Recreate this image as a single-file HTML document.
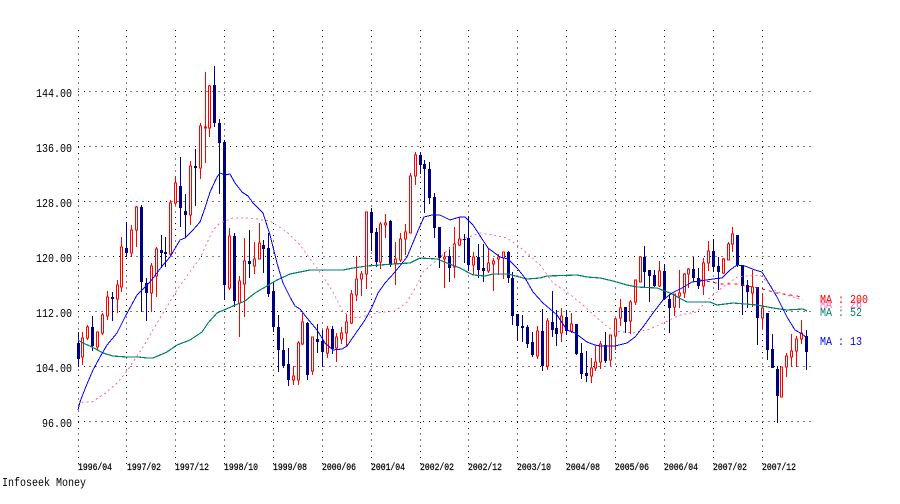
<!DOCTYPE html>
<html lang="ja"><head><meta charset="utf-8"><title>Infoseek Money</title>
<style>html,body{margin:0;padding:0;background:#fff}svg{display:block}
text{font-family:"Liberation Mono","DejaVu Sans Mono",monospace}</style></head>
<body>
<svg width="900" height="504" viewBox="0 0 900 504" xmlns="http://www.w3.org/2000/svg">
<g fill="none" stroke="#000" stroke-width="1" stroke-dasharray="1 4.85" shape-rendering="crispEdges">
<path d="M78.5 30V466M126.5 30V466M175.5 30V466M224.5 30V466M273.5 30V466M322.5 30V466M371.5 30V466M420.5 30V466M468.5 30V466M517.5 30V466M566.5 30V466M615.5 30V466M664.5 30V466M713.5 30V466M762.5 30V466"/>
<path d="M78 91.5H811M78 146.5H811M78 201.5H811M78 256.5H811M78 311.5H811M78 366.5H811M78 421.5H811"/>
</g>
<g fill="none" shape-rendering="crispEdges">
<path stroke="#000080" d="M78.5 332V367M92.5 316V351M112.5 292V321M126.5 222V257M141.5 205V312M146.5 278V321M161.5 235V268M165.5 237V267M180.5 157V227M185.5 194V238M195.5 149V206M214.5 66V127M219.5 119V194M224.5 140V300M234.5 233V307M249.5 230V278M263.5 240V273M268.5 233V297M273.5 282V332M278.5 315V372M283.5 338V368M288.5 348V386M307.5 322V380M317.5 324V353M322.5 330V367M332.5 326V354M371.5 208V251M376.5 228V267M390.5 220V267M420.5 152V174M424.5 160V213M429.5 162V204M434.5 193V238M439.5 227V268M449.5 247V282M464.5 234V263M468.5 216V270M478.5 244V278M483.5 244V282M508.5 251V283M512.5 272V325M517.5 314V340M522.5 315V342M527.5 325V348M532.5 332V357M542.5 309V371M552.5 291V337M556.5 310V346M566.5 310V334M576.5 324V355M581.5 343V379M586.5 351V382M605.5 332V363M625.5 307V333M644.5 246V287M649.5 270V302M654.5 270V287M664.5 264V300M669.5 294V333M693.5 257V282M698.5 268V289M713.5 239V272M718.5 257V290M737.5 235V267M742.5 265V315M747.5 280V308M757.5 287V345M767.5 313V360M772.5 334V368M777.5 366V423M806.5 330V370"/>
<path stroke="#000080" stroke-width="3" d="M78.5 343V359M92.5 327V346M112.5 297V299M126.5 248V253M141.5 207V282M146.5 283V293M161.5 250V253M165.5 252V254M180.5 186V208M185.5 211V215M195.5 166V168M214.5 85V123M219.5 123V143M224.5 142V285M234.5 236V301M249.5 261V264M263.5 245V249M268.5 248V294M273.5 291V327M278.5 327V350M283.5 350V366M288.5 364V380M307.5 323V375M317.5 339V342M322.5 341V352M332.5 329V349M371.5 212V233M376.5 232V262M390.5 221V265M420.5 155V165M424.5 164V169M429.5 169V198M434.5 197V228M439.5 227V258M449.5 256V268M464.5 239V240M468.5 238V265M478.5 257V270M483.5 268V271M508.5 252V278M512.5 278V316M517.5 314V326M522.5 326V328M527.5 327V344M532.5 342V355M542.5 331V366M552.5 322V330M556.5 328V334M566.5 317V331M576.5 324V354M581.5 353V374M586.5 373V376M605.5 345V361M625.5 307V322M644.5 257V272M649.5 270V276M654.5 275V286M664.5 271V299M669.5 299V308M693.5 269V278M698.5 278V286M713.5 251V267M718.5 266V272M737.5 235V265M742.5 265V286M747.5 285V292M757.5 287V318M767.5 313V350M772.5 349V368M777.5 369V396M806.5 336V352"/>
<path stroke="#f00" d="M82.5 332V365M87.5 325V340M97.5 332V350M102.5 313V335M107.5 291V320M117.5 280V313M121.5 237V292M131.5 225V257M136.5 206V247M151.5 263V312M156.5 247V297M170.5 200V256M175.5 176V205M190.5 161V225M200.5 123V179M205.5 72V163M209.5 85V137M229.5 228V290M239.5 276V337M244.5 238V317M254.5 242V274M259.5 223V259M293.5 366V385M298.5 341V385M302.5 313V345M312.5 337V375M327.5 326V358M336.5 333V362M341.5 327V344M346.5 314V347M351.5 290V324M356.5 256V301M361.5 271V296M366.5 212V289M380.5 222V269M385.5 214V238M395.5 242V285M400.5 233V262M405.5 224V255M410.5 173V233M415.5 152V185M444.5 252V288M454.5 227V278M459.5 217V246M473.5 252V275M488.5 248V273M493.5 258V291M498.5 254V275M503.5 252V279M537.5 326V359M547.5 318V370M561.5 308V342M571.5 313V333M591.5 358V383M595.5 346V371M600.5 341V369M610.5 335V366M615.5 318V350M620.5 299V326M630.5 300V334M635.5 280V305M640.5 257V282M659.5 261V287M674.5 294V316M679.5 270V308M684.5 273V298M688.5 268V288M703.5 258V295M708.5 241V271M723.5 258V274M728.5 242V260M732.5 227V252M752.5 270V307M762.5 293V329M781.5 367V397M786.5 353V377M791.5 334V367M796.5 336V367M801.5 320V344"/>
<path stroke="#f00" fill="#fff" d="M81.5 338h2v19h-2zM86.5 327h2v11h-2zM96.5 332h2v15h-2zM101.5 315h2v18h-2zM106.5 297h2v19h-2zM116.5 285h2v14h-2zM120.5 247h2v40h-2zM130.5 230h2v23h-2zM135.5 207h2v23h-2zM150.5 266h2v27h-2zM155.5 249h2v27h-2zM169.5 203h2v51h-2zM174.5 183h2v20h-2zM189.5 166h2v49h-2zM199.5 126h2v42h-2zM204.5 127h2v1h-2zM208.5 86h2v42h-2zM228.5 236h2v52h-2zM238.5 281h2v22h-2zM243.5 261h2v23h-2zM253.5 259h2v7h-2zM258.5 243h2v16h-2zM292.5 376h2v4h-2zM297.5 343h2v37h-2zM301.5 322h2v22h-2zM311.5 337h2v34h-2zM326.5 329h2v24h-2zM335.5 337h2v11h-2zM340.5 333h2v6h-2zM345.5 322h2v11h-2zM350.5 294h2v29h-2zM355.5 279h2v16h-2zM360.5 274h2v5h-2zM365.5 212h2v62h-2zM379.5 224h2v38h-2zM384.5 223h2v2h-2zM394.5 259h2v4h-2zM399.5 239h2v21h-2zM404.5 232h2v7h-2zM409.5 176h2v57h-2zM414.5 155h2v21h-2zM443.5 257h2v2h-2zM453.5 244h2v23h-2zM458.5 239h2v6h-2zM472.5 257h2v8h-2zM487.5 263h2v8h-2zM492.5 261h2v3h-2zM497.5 257h2v2h-2zM502.5 252h2v6h-2zM536.5 331h2v25h-2zM546.5 321h2v45h-2zM560.5 316h2v17h-2zM570.5 324h2v7h-2zM590.5 368h2v8h-2zM594.5 362h2v6h-2zM599.5 344h2v18h-2zM609.5 335h2v25h-2zM614.5 319h2v17h-2zM619.5 308h2v10h-2zM629.5 302h2v19h-2zM634.5 280h2v22h-2zM639.5 257h2v25h-2zM658.5 271h2v15h-2zM673.5 294h2v13h-2zM678.5 293h2v3h-2zM683.5 274h2v19h-2zM687.5 269h2v5h-2zM702.5 263h2v23h-2zM707.5 251h2v12h-2zM722.5 259h2v14h-2zM727.5 244h2v16h-2zM731.5 234h2v10h-2zM751.5 287h2v6h-2zM761.5 308h2v10h-2zM780.5 367h2v30h-2zM785.5 356h2v11h-2zM790.5 351h2v6h-2zM795.5 339h2v12h-2zM800.5 333h2v6h-2z"/>
</g>
<g fill="none" stroke-width="1" shape-rendering="crispEdges">
<polyline stroke="#ff69b4" stroke-dasharray="2 3" points="78,406 83,402 92,402 107,392 118,382 127,371 133,362 143,347 157,323 177,290 200,258 213,230 220,223 233,218 250,218 270,221 287,232 300,245 322,275 333,292 343,312 348,315 357,318 377,313 395,311 407,302 417,285 423,272 437,260 450,248 463,239 480,233 493,235 507,238 520,247 540,265 553,283 567,292 583,305 597,318 613,331 633,333 650,329 663,323 680,315 697,312 707,300 723,287 737,277 760,275 768,283 777,292 790,296 803,300"/>
<polyline stroke="#f00" stroke-dasharray="3 4" points="700,280 722,284 738,284 762,289 777,293 803,297"/>
<polyline stroke="#00806e" stroke-width="1.2" points="78,340 83,343 92,347 103,353 113,356 127,357 138,357 147,358 153,358 167,352 177,345 190,340 202,332 208,323 217,313 233,306 245,301 255,293 267,286 277,280 290,274 300,272 310,270 343,270 353,268 367,266 393,264 410,263 420,258 437,259 447,263 460,268 473,275 485,276 493,274 508,274 527,279 540,278 547,276 577,275 587,277 600,278 613,281 627,285 637,287 657,288 670,293 687,302 710,302 717,305 733,303 757,305 773,308 787,310 803,309 807,311"/>
<polyline stroke="#00f" points="78,410 80,402 83,394 87,384 93,370 100,357 107,345 117,333 125,317 131,306 137,295 150,282 163,265 170,257 180,240 185,238 193,230 200,222 205,208 210,192 217,177 220,173 225,175 230,174 235,183 242,192 248,196 253,203 258,208 263,213 270,235 277,263 283,283 290,297 295,306 300,309 307,318 317,330 325,343 333,350 342,349 347,346 358,330 365,320 372,307 378,293 385,283 395,272 407,257 417,233 424,217 432,215 440,215 450,220 460,217 465,217 473,225 488,248 500,257 508,259 517,268 525,278 533,292 543,303 557,315 567,330 575,333 587,342 595,345 600,346 615,346 627,343 635,337 643,327 653,313 663,300 672,293 682,288 692,282 700,281 713,279 722,278 730,270 737,265 745,266 755,270 762,272 768,282 777,297 787,317 795,330 802,334 807,338"/>
</g>
<g font-size="12" fill="#000">
<text x="36" y="97" textLength="36" lengthAdjust="spacingAndGlyphs">144.00</text>
<text x="36" y="152" textLength="36" lengthAdjust="spacingAndGlyphs">136.00</text>
<text x="36" y="207" textLength="36" lengthAdjust="spacingAndGlyphs">128.00</text>
<text x="36" y="262" textLength="36" lengthAdjust="spacingAndGlyphs">120.00</text>
<text x="36" y="317" textLength="36" lengthAdjust="spacingAndGlyphs">112.00</text>
<text x="36" y="372" textLength="36" lengthAdjust="spacingAndGlyphs">104.00</text>
<text x="42" y="427" textLength="30" lengthAdjust="spacingAndGlyphs">96.00</text>
</g>
<g font-size="10" fill="#000" stroke="#000" stroke-width=".25">
<text x="78" y="470" textLength="34" lengthAdjust="spacingAndGlyphs">1996/04</text>
<text x="127" y="470" textLength="34" lengthAdjust="spacingAndGlyphs">1997/02</text>
<text x="175" y="470" textLength="34" lengthAdjust="spacingAndGlyphs">1997/12</text>
<text x="224" y="470" textLength="34" lengthAdjust="spacingAndGlyphs">1998/10</text>
<text x="273" y="470" textLength="34" lengthAdjust="spacingAndGlyphs">1999/08</text>
<text x="322" y="470" textLength="34" lengthAdjust="spacingAndGlyphs">2000/06</text>
<text x="371" y="470" textLength="34" lengthAdjust="spacingAndGlyphs">2001/04</text>
<text x="420" y="470" textLength="34" lengthAdjust="spacingAndGlyphs">2002/02</text>
<text x="468" y="470" textLength="34" lengthAdjust="spacingAndGlyphs">2002/12</text>
<text x="517" y="470" textLength="34" lengthAdjust="spacingAndGlyphs">2003/10</text>
<text x="566" y="470" textLength="34" lengthAdjust="spacingAndGlyphs">2004/08</text>
<text x="615" y="470" textLength="34" lengthAdjust="spacingAndGlyphs">2005/06</text>
<text x="664" y="470" textLength="34" lengthAdjust="spacingAndGlyphs">2006/04</text>
<text x="713" y="470" textLength="34" lengthAdjust="spacingAndGlyphs">2007/02</text>
<text x="762" y="470" textLength="34" lengthAdjust="spacingAndGlyphs">2007/12</text>
</g>
<text x="2" y="486" font-size="12" fill="#000" textLength="84" lengthAdjust="spacingAndGlyphs">Infoseek Money</text>
<g font-size="12">
<text x="820" y="308" fill="#ff69b4" textLength="42" lengthAdjust="spacingAndGlyphs">MA : 26</text>
<text x="820" y="303" fill="#f00" textLength="48" lengthAdjust="spacingAndGlyphs">MA : 200</text>
<text x="820" y="316" fill="#00806e" textLength="42" lengthAdjust="spacingAndGlyphs">MA : 52</text>
<text x="820" y="345" fill="#00f" textLength="42" lengthAdjust="spacingAndGlyphs">MA : 13</text>
</g>
</svg>
</body></html>
